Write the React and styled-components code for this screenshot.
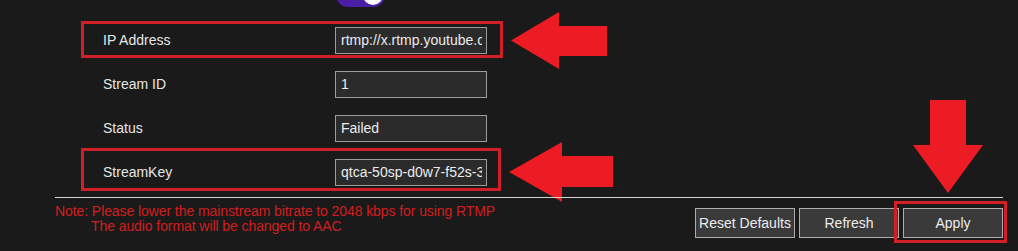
import React from 'react';
import styled, { createGlobalStyle } from 'styled-components';

const GlobalStyle = createGlobalStyle`
  body {
    margin: 0;
    background: #1a1a1a;
    font-family: "Liberation Sans", Arial, sans-serif;
  }
`;

const Page = styled.div`
  position: relative;
  width: 1018px;
  height: 251px;
  overflow: hidden;
  background: #1a1a1a;
`;

const ToggleRow = styled.div`
  display: flex;
  align-items: flex-start;
  height: 18px;
  padding-left: 336px;
`;

const Toggle = styled.div`
  width: 49px;
  height: 24px;
  margin-top: -17px;
  border-radius: 12px;
  background: #4a1fa6;
  position: relative;
  &::after {
    content: '';
    position: absolute;
    right: 2px;
    top: 2px;
    width: 20px;
    height: 20px;
    border-radius: 50%;
    background: #fff;
  }
`;

const Form = styled.div`
  margin-left: 81px;
`;

const Row = styled.div`
  position: relative;
  display: flex;
  align-items: center;
  box-sizing: border-box;
  width: 422px;
  height: 44px;
  padding: 0 13px 0 22px;
  ${(p) =>
    p.$frame &&
    `
    &::before {
      content: '';
      position: absolute;
      inset: ${p.$frame};
      border: 3px solid #d11f28;
      pointer-events: none;
    }
  `}
`;

const Label = styled.div`
  width: 232px;
  font-size: 14px;
  color: #e6e6e6;
`;

const Field = styled.input`
  box-sizing: border-box;
  width: 152px;
  height: 27px;
  margin: 0;
  padding: 0 4px 0 5px;
  background: #2b2b2b;
  border: 1px solid #9c9c9c;
  color: #ececec;
  font-family: "Liberation Sans", Arial, sans-serif;
  font-size: 14px;
  outline: none;
`;

const Divider = styled.div`
  position: relative;
  z-index: 2;
  height: 1px;
  margin: 3px 15px 0 55px;
  background: #d6d6d6;
`;

const Footer = styled.div`
  display: flex;
  justify-content: space-between;
  padding: 0 15px 0 55px;
`;

const Note = styled.div`
  margin-top: 6px;
  font-size: 14px;
  line-height: 15px;
  letter-spacing: -0.08px;
  color: #d21e1e;
`;

const NoteLine = styled.div`
  padding-left: ${(p) => p.$indent || 0}px;
`;

const Buttons = styled.div`
  display: flex;
  gap: 4px;
  margin-top: 10px;
`;

const Button = styled.button`
  position: relative;
  box-sizing: border-box;
  width: 100px;
  height: 30px;
  padding: 0;
  background: #3a3a3a;
  border: 1px solid #adadad;
  color: #ececec;
  font-family: "Liberation Sans", Arial, sans-serif;
  font-size: 14px;
  ${(p) =>
    p.$marked &&
    `
    &::after {
      content: '';
      position: absolute;
      top: -8px;
      left: -10px;
      right: -5px;
      bottom: -6px;
      border: 3px solid #d11f28;
    }
  `}
`;

const ArrowMark = styled.svg`
  position: absolute;
  left: ${(p) => p.$x}px;
  top: ${(p) => p.$y}px;
  z-index: 1;
`;

const RED = '#ed1c24';

const LeftArrow = ({ x, y, w, h, head, shaftTop, shaftBottom }) => (
  <ArrowMark $x={x} $y={y} width={w} height={h} viewBox={`0 0 ${w} ${h}`}>
    <polygon
      fill={RED}
      points={`0,${h / 2} ${head},0 ${head},${shaftTop} ${w},${shaftTop} ${w},${shaftBottom} ${head},${shaftBottom} ${head},${h}`}
    />
  </ArrowMark>
);

const DownArrow = ({ x, y }) => (
  <ArrowMark $x={x} $y={y} width="70" height="93" viewBox="0 0 70 93">
    <polygon fill={RED} points="17,0 53,0 53,45 70,45 35,93 0,45 17,45" />
  </ArrowMark>
);

const rows = [
  { label: 'IP Address', value: 'rtmp://x.rtmp.youtube.com/live2', frame: '3px 0 4px 0' },
  { label: 'Stream ID', value: '1' },
  { label: 'Status', value: 'Failed' },
  { label: 'StreamKey', value: 'qtca-50sp-d0w7-f52s-3wxz', frame: '-2px 2px 3px 0' },
];

export default function App() {
  return (
    <>
      <GlobalStyle />
      <Page>
        <ToggleRow>
          <Toggle />
        </ToggleRow>
        <Form>
          {rows.map((r) => (
            <Row key={r.label} $frame={r.frame}>
              <Label>{r.label}</Label>
              <Field readOnly value={r.value} />
            </Row>
          ))}
        </Form>
        <Divider />
        <Footer>
          <Note>
            <NoteLine>Note: Please lower the mainstream bitrate to 2048 kbps for using RTMP</NoteLine>
            <NoteLine $indent={36}>The audio format will be changed to AAC</NoteLine>
          </Note>
          <Buttons>
            <Button>Reset Defaults</Button>
            <Button>Refresh</Button>
            <Button $marked>Apply</Button>
          </Buttons>
        </Footer>
        <LeftArrow x={511} y={12} w={96} h={57} head={48} shaftTop={14} shaftBottom={44} />
        <LeftArrow x={509} y={142} w={104} h={60} head={53} shaftTop={14} shaftBottom={45} />
        <DownArrow x={913} y={100} />
      </Page>
    </>
  );
}
